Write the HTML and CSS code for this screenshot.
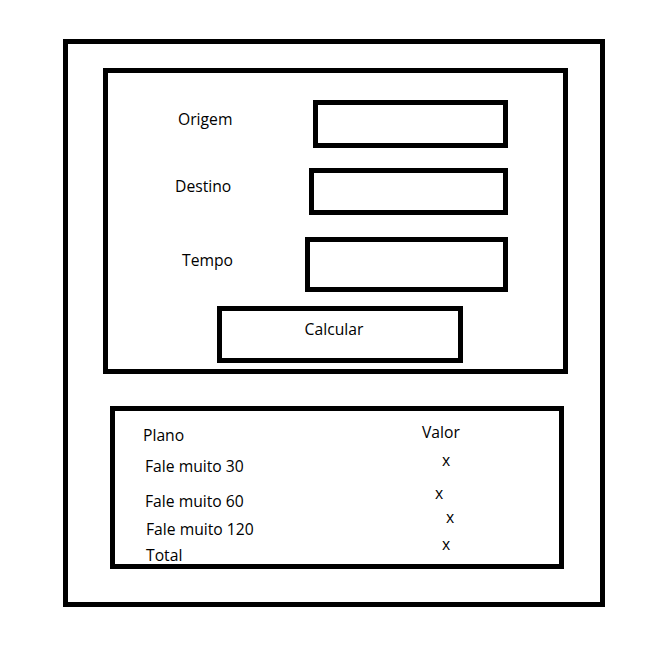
FILE: index.html
```html
<!DOCTYPE html>
<html lang="pt">
<head>
<meta charset="UTF-8" />
<title>Calculadora Fale Muito</title>
<link rel="stylesheet" href="styles.css">
</head>
<body>
<div class="page">
  <div class="frame">
    <form class="calc" onsubmit="return false;">
      <div class="row row-origem">
        <label for="origem" class="lbl lbl-origem">Origem</label>
        <input type="text" id="origem" class="field field-origem">
      </div>
      <div class="row row-destino">
        <label for="destino" class="lbl lbl-destino">Destino</label>
        <input type="text" id="destino" class="field field-destino">
      </div>
      <div class="row row-tempo">
        <label for="tempo" class="lbl lbl-tempo">Tempo</label>
        <input type="text" id="tempo" class="field field-tempo">
      </div>
      <button type="submit" class="btn">Calcular</button>
    </form>

    <div class="result">
      <div class="col col-plano">
        <span class="cell c-head">Plano</span>
        <span class="cell c-30">Fale muito 30</span>
        <span class="cell c-60">Fale muito 60</span>
        <span class="cell c-120">Fale muito 120</span>
        <span class="cell c-total">Total</span>
      </div>
      <div class="col col-valor">
        <span class="cell v-head">Valor</span>
        <span class="cell v-30">x</span>
        <span class="cell v-60">x</span>
        <span class="cell v-120">x</span>
        <span class="cell v-total">x</span>
      </div>
    </div>
  </div>
</div>
</body>
</html>
```

FILE: styles.css
```css
/* Reset and basic */
* {
  box-sizing: border-box;
}
body {
  margin: 0;
  background: #fff;
  color: #000;
  font-family: 'Open Sans', 'Noto Sans', sans-serif;
  font-size: 15.7px;
  line-height: 20px;
}
.page {
  padding: 39px 0 0 63px;
}
.frame {
  width: 542px;
  height: 568px;
  border: 5px solid #000;
}

/* top box: form */
.calc {
  margin: 24px 32px 0 35px;
  height: 306px;
  border: 5px solid #000;
  padding-top: 27px;
  display: flex;
  flex-direction: column;
}
.row {
  display: flex;
  align-items: center;
  padding-right: 55px;
}
.row-destino {
  margin-top: 20px;
}
.row-tempo {
  margin-top: 22px;
}
.lbl {
  margin-bottom: 10px;
}
.lbl-origem {
  margin-left: 70px;
}
.lbl-destino {
  margin-left: 67px;
  margin-bottom: 11px;
}
.lbl-tempo {
  margin-left: 74px;
}
.field {
  margin-left: auto;
  border: 5px solid #000;
  border-radius: 0;
  background: #fff;
  padding: 0 6px;
  font: inherit;
  outline: none;
}
.field-origem {
  width: 195px;
  height: 48px;
}
.field-destino {
  width: 199px;
  height: 47px;
}
.field-tempo {
  width: 203px;
  height: 55px;
}
.btn {
  margin: 14px 0 0 109px;
  width: 246px;
  height: 57px;
  border: 5px solid #000;
  border-radius: 0;
  background: #fff;
  color: #000;
  font: inherit;
  padding: 0 12px 12px 0;
  cursor: pointer;
}

/* bottom box: result table */
.result {
  margin: 32px 36px 0 42px;
  height: 163px;
  border: 5px solid #000;
  display: flex;
}
.col {
  display: flex;
  flex-direction: column;
  align-items: flex-start;
}
.col-plano {
  width: 279px;
  margin-left: 28px;
  padding-top: 14px;
}
.col-valor {
  padding-top: 11px;
}
.c-30,
.c-60 {
  margin-left: 2px;
}
.c-120,
.c-total {
  margin-left: 3px;
}
.c-30 { margin-top: 11px; }
.c-60 { margin-top: 15px; }
.c-120 { margin-top: 8px; }
.c-total { margin-top: 6px; }

.v-30 { margin: 8px 0 0 20px; }
.v-60 { margin: 13px 0 0 13px; }
.v-120 { margin: 4px 0 0 24px; }
.v-total { margin: 7px 0 0 20px; }
```
